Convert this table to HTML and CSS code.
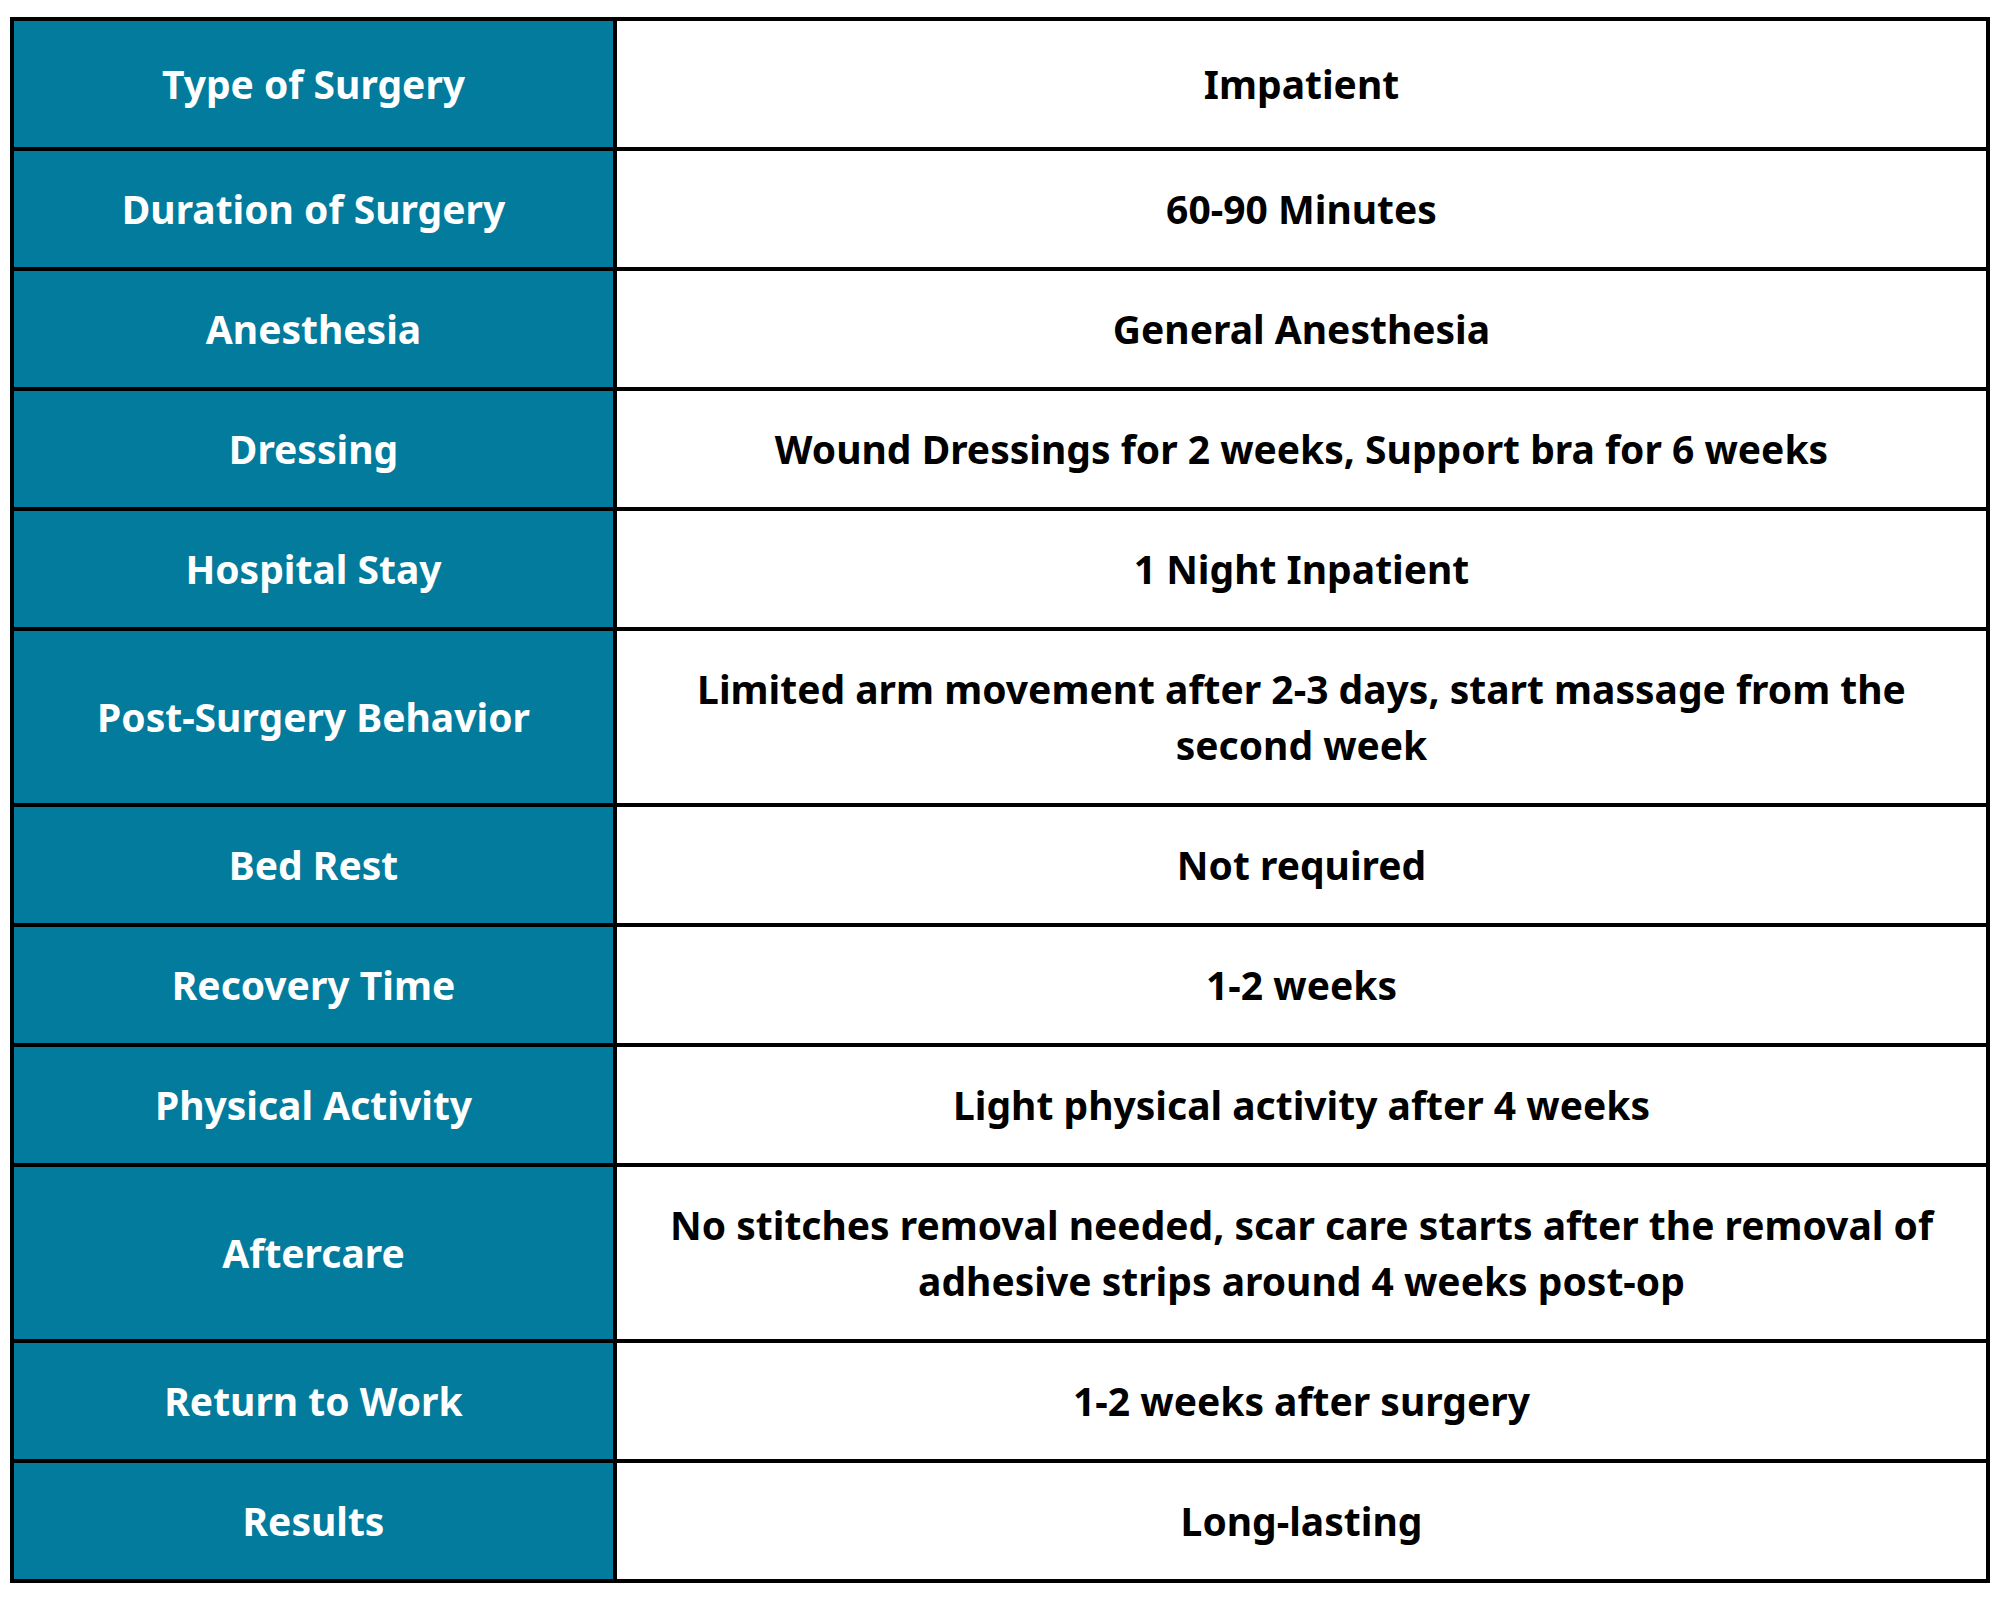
FILE: index.html
```html
<!DOCTYPE html>
<html lang="en">
<head>
<meta charset="utf-8">
<title>Surgery Details</title>
<link rel="stylesheet" href="styles.css">
</head>
<body>
<div class="sheet">
  <div class="label">Type of Surgery</div>
  <div class="value">Impatient</div>

  <div class="label">Duration of Surgery</div>
  <div class="value">60-90 Minutes</div>

  <div class="label">Anesthesia</div>
  <div class="value">General Anesthesia</div>

  <div class="label">Dressing</div>
  <div class="value">Wound Dressings for 2 weeks, Support bra for 6 weeks</div>

  <div class="label">Hospital Stay</div>
  <div class="value">1 Night Inpatient</div>

  <div class="label">Post-Surgery Behavior</div>
  <div class="value">Limited arm movement after 2-3 days, start massage from the<br>second week</div>

  <div class="label">Bed Rest</div>
  <div class="value">Not required</div>

  <div class="label">Recovery Time</div>
  <div class="value">1-2 weeks</div>

  <div class="label">Physical Activity</div>
  <div class="value">Light physical activity after 4 weeks</div>

  <div class="label">Aftercare</div>
  <div class="value">No stitches removal needed, scar care starts after the removal of<br>adhesive strips around 4 weeks post-op</div>

  <div class="label">Return to Work</div>
  <div class="value">1-2 weeks after surgery</div>

  <div class="label">Results</div>
  <div class="value">Long-lasting</div>
</div>
</body>
</html>
```
FILE: styles.css
```css
html, body {
  margin: 0;
  padding: 0;
  background: #ffffff;
}

body {
  padding: 17px 0 0 10px;
  font-family: "Noto Sans", "Open Sans", sans-serif;
  font-weight: 700;
  font-size: 39px;
  line-height: 56px;
}

.sheet {
  width: 1980px;
  box-sizing: border-box;
  display: grid;
  grid-template-columns: 599px 1369px;
  grid-template-rows: 126px repeat(4, 116px) 172px repeat(3, 116px) 172px repeat(2, 116px);
  gap: 4px;
  padding: 4px;
  background: #000000;
}

.label,
.value {
  display: flex;
  align-items: center;
  justify-content: center;
  text-align: center;
}

.label {
  background: #027b9d;
  color: #ffffff;
}

.value {
  background: #ffffff;
  color: #000000;
  padding: 0 24px;
}
```
